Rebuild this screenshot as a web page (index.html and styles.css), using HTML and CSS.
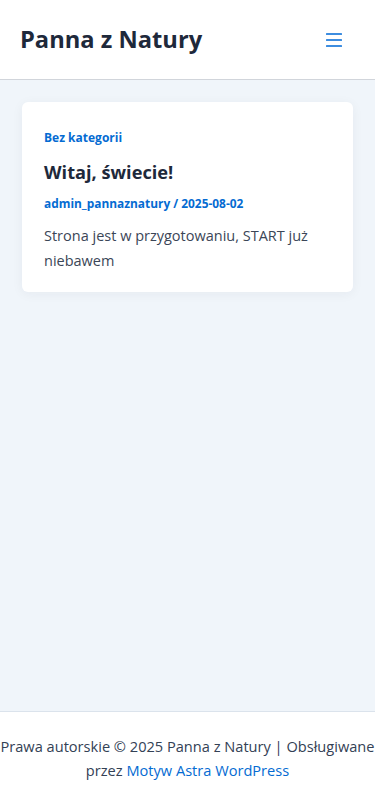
FILE: index.html
```html
<!DOCTYPE html>
<html lang="pl">
<head>
<meta charset="utf-8">
<meta name="viewport" content="width=device-width, initial-scale=1">
<title>Panna z Natury</title>
<link rel="stylesheet" href="styles.css">
</head>
<body>
<div class="page">
  <header class="site-header">
    <div class="site-title">Panna z Natury</div>
    <button class="menu-toggle" aria-label="Menu">
      <svg width="16" height="14" viewBox="0 0 16 14" aria-hidden="true">
        <rect x="0" y="0" width="16" height="2" rx="0.5"/>
        <rect x="0" y="6" width="16" height="2" rx="0.5"/>
        <rect x="0" y="12" width="16" height="2" rx="0.5"/>
      </svg>
    </button>
  </header>
  <main class="site-main">
    <article class="post-card">
      <a class="post-cat" href="#">Bez kategorii</a>
      <h2 class="post-title">Witaj, świecie!</h2>
      <div class="post-meta"><a href="#">admin_pannaznatury</a> / <a href="#">2025-08-02</a></div>
      <p class="post-excerpt">Strona jest w przygotowaniu, START już niebawem</p>
    </article>
  </main>
  <footer class="site-footer">
    <p class="copyright">Prawa autorskie © 2025 Panna z Natury | Obsługiwane przez <a href="#">Motyw Astra WordPress</a></p>
  </footer>
</div>
</body>
</html>
```

FILE: styles.css
```css
* { box-sizing: border-box; }
html, body { margin: 0; padding: 0; }
body {
  font-family: "Open Sans", "Noto Sans", sans-serif;
  color: #334155;
  background: #ffffff;
}
a { color: #046bd2; text-decoration: none; }

.page {
  min-height: 812px;
  display: flex;
  flex-direction: column;
}

.site-header {
  height: 80px;
  display: flex;
  align-items: center;
  justify-content: space-between;
  padding: 0 33px 0 20px;
  border-bottom: 1px solid #d1d5db;
  background: #fff;
}
.site-title {
  font-size: 23.7px;
  font-weight: 700;
  color: #1e293b;
  line-height: 1;
}
.menu-toggle {
  background: none;
  border: 0;
  padding: 0;
  display: flex;
  fill: #3d8de0;
}

.site-main {
  flex: 1;
  background: #f0f5fa;
  padding: 22px 22px;
}
.post-card {
  background: #fff;
  border-radius: 6px;
  padding: 27px 22px 19px;
  box-shadow: 0 2px 12px rgba(30, 41, 59, 0.05);
}
.post-cat {
  display: block;
  font-size: 12px;
  font-weight: 700;
  line-height: 17px;
}
.post-title {
  margin: 13px 0 0;
  font-size: 18.2px;
  font-weight: 700;
  line-height: 26px;
  color: #1e293b;
}
.post-meta {
  margin-top: 10px;
  font-size: 11.9px;
  font-weight: 700;
  line-height: 17px;
  color: #046bd2;
}
.post-excerpt {
  margin: 11px 0 0;
  font-size: 14.5px;
  line-height: 25px;
  color: #3b4657;
}

.site-footer {
  background: #fff;
  border-top: 1px solid #dbe3ec;
  padding: 22px 0 30px;
}
.copyright {
  margin: 0 -10px;
  text-align: center;
  font-size: 14.6px;
  line-height: 24px;
  color: #334155;
}
```
